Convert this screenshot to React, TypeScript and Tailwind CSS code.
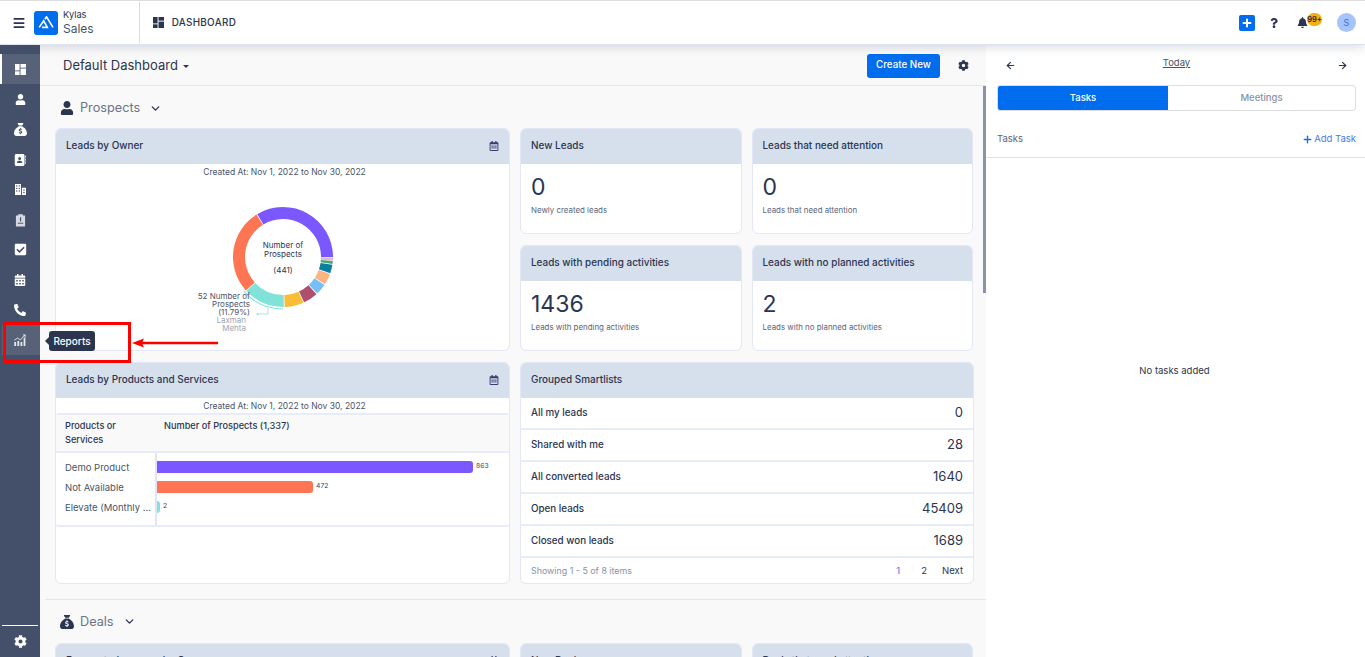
import { ArrowLeft, ArrowRight, ChevronDown, Menu, Plus } from "lucide-react";
import { FaBell, FaCalendarAlt, FaCheckSquare, FaCog, FaPhoneAlt, FaQuestion, FaUser, FaRegCalendarAlt } from "react-icons/fa";
import { FaSackDollar, FaAddressBook } from "react-icons/fa6";

const font = "font-['Inter','Liberation_Sans',sans-serif]";

function DashIcon({ className }: { className?: string }) {
  return (
    <svg viewBox="0 0 12 12" className={className} fill="currentColor">
      <rect x="0" y="0" width="5" height="7" />
      <rect x="0" y="8" width="5" height="4" />
      <rect x="6" y="0" width="6" height="4" />
      <rect x="6" y="5" width="6" height="7" />
    </svg>
  );
}

function BuildingIcon() {
  return (
    <svg viewBox="0 0 12 12" className="h-[11px] w-[11px]" fill="currentColor">
      <path d="M0 0h6.5v12H0zM7.5 4H12v8H7.5z" />
      <g fill="#44506a">
        <rect x="1.2" y="1.5" width="1.3" height="1.3" />
        <rect x="4" y="1.5" width="1.3" height="1.3" />
        <rect x="1.2" y="4.2" width="1.3" height="1.3" />
        <rect x="4" y="4.2" width="1.3" height="1.3" />
        <rect x="1.2" y="7" width="1.3" height="1.3" />
        <rect x="4" y="7" width="1.3" height="1.3" />
        <rect x="9" y="6" width="1.5" height="1.3" />
        <rect x="9" y="8.6" width="1.5" height="1.3" />
      </g>
    </svg>
  );
}

function ClipIcon() {
  return (
    <svg viewBox="0 0 12 14" className="h-[14px] w-[11px] text-[#d5d9e2]" fill="currentColor">
      <path d="M1 2h2.5V.8h5V2H11v12H1z" />
      <rect x="3" y="10" width="6" height="1" fill="#44506a" />
      <rect x="5.4" y="4" width="1.3" height="4.5" fill="#44506a" />
    </svg>
  );
}

function ReportIcon() {
  return (
    <svg viewBox="0 0 12 12" className="h-[12px] w-[12px] text-[#e4e7ee]" fill="currentColor">
      <rect x="0.3" y="8" width="1.8" height="4" />
      <rect x="3.4" y="7" width="1.8" height="5" />
      <rect x="6.5" y="8" width="1.8" height="4" />
      <rect x="9.6" y="3.5" width="1.8" height="8.5" />
      <path d="M0.3 6.2 3.6 4l2.8 2 3.8-4.6" stroke="currentColor" strokeWidth="0.9" fill="none" />
      <path d="M8.6 0.6h3v3z" />
    </svg>
  );
}

function Sidebar() {
  const ic = "h-[11px] w-[11px]";
  const items = [
    <DashIcon className={ic} key="a" />,
    <FaUser className={ic} key="b" />,
    <FaSackDollar className="h-[13px] w-[13px]" key="c" />,
    <FaAddressBook className="h-[12px] w-[12px]" key="d" />,
    <BuildingIcon key="e" />,
    <ClipIcon key="f" />,
    <FaCheckSquare className="h-[13px] w-[13px]" key="g" />,
    <FaCalendarAlt className="h-[12px] w-[12px]" key="h" />,
    <FaPhoneAlt className="h-[12px] w-[12px]" key="i" />,
    <ReportIcon key="j" />,
  ];
  return (
    <aside className="flex w-10 shrink-0 flex-col bg-[#44506a] text-white">
      <div className="flex flex-1 flex-col pt-[9px]">
        {items.map((icon, i) => (
          <div
            key={i}
            className={
              "flex h-[30px] items-center justify-center " +
              (i === 0 ? "border-l-2 border-white bg-[#576279] pr-[1px] mb-[0.6px]" : "") +
              (i === 9 ? "bg-[#576279] ml-[2px] pr-[2px]" : "")
            }
          >
            {icon}
          </div>
        ))}
      </div>
      <div className="mx-[2px] h-[1px] bg-white" />
      <div className="flex h-[31px] items-center justify-center">
        <FaCog className="h-[13px] w-[13px]" />
      </div>
    </aside>
  );
}

function Header() {
  return (
    <header className="relative z-10 flex h-[45px] shrink-0 items-center border-t border-[#dddddd] border-b border-b-[#dfe3f0] bg-white shadow-[0_2px_10px_rgba(60,70,100,0.2)]">
      <Menu className="ml-[12px] h-[14px] w-[14px] text-[#2b3550]" strokeWidth={3} />
      <div className="ml-[8px] flex h-[24px] w-[24px] items-center justify-center rounded-[3px] bg-[#006dee]">
        <svg viewBox="0 0 20 16" className="h-[13px] w-[17px]" fill="none" stroke="white" strokeWidth="2">
          <path d="M1 14 6.5 6 11 14H4.5M8 4l2-3 8 13" />
        </svg>
      </div>
      <div className="ml-[5px] flex flex-col text-[#2b3550]">
        <span className="text-[9.3px] leading-[12px]">Kylas</span>
        <span className="text-[12px] leading-[16px] text-[#4a5468]">Sales</span>
      </div>
      <div className="ml-[45px] h-[41px] w-px bg-[#d9dce3]" />
      <DashIcon className="ml-[13px] h-[11px] w-[11px] text-[#2b3550]" />
      <span className="mb-[1px] ml-[8px] text-[9.9px] font-medium tracking-[0.3px] text-[#2b3550]">DASHBOARD</span>
      <div className="ml-auto flex items-center">
        <div className="flex h-4 w-4 items-center justify-center rounded-[2px] bg-[#006dee]">
          <Plus className="h-3 w-3 text-white" strokeWidth={4} />
        </div>
        <FaQuestion className="ml-[14px] h-[10px] w-[10px] text-[#2b3550]" />
        <div className="relative ml-[18px] mr-[29px] text-[#2b3550]">
          <FaBell className="h-[11px] w-[11px]" />
          <span className="absolute -top-[4px] left-[10px] flex h-[13px] w-[15px] items-center justify-center rounded-full bg-[#f2b111] text-[7.5px] font-semibold text-[#1f2533]">
            99+
          </span>
        </div>
        <div className="mr-[9px] flex h-[19px] w-[19px] items-center justify-center rounded-full bg-[#a5c4fb] text-[9px] text-[#3f6fd0]">
          S
        </div>
      </div>
    </header>
  );
}

function Card({ title, icon, children, className }: { title: string; icon?: boolean; children?: React.ReactNode; className?: string }) {
  return (
    <div className={"overflow-hidden rounded-[6px] border border-[#e3e7f6] bg-white " + (className ?? "")}>
      <div className="flex h-[35px] items-center justify-between bg-[#d6e0ec] pb-[2px] pl-[10px] pr-[10px] text-[9.95px] font-medium text-[#2b3550]">
        <span>{title}</span>
        {icon && <FaRegCalendarAlt className="h-[10px] w-[10px] text-[#3a3a6e]" />}
      </div>
      {children}
    </div>
  );
}

function Stat({ title, value, sub }: { title: string; value: string; sub: string }) {
  return (
    <Card title={title}>
      <div className="px-[10px] pt-[9px] text-[#2b3550]">
        <div className="text-[23px] leading-[28px]">{value}</div>
        <div className="mt-[3px] text-[7.9px] leading-[12px] text-[#5a6478]">{sub}</div>
      </div>
    </Card>
  );
}

function polar(r: number, deg: number) {
  const a = ((deg - 90) * Math.PI) / 180;
  return [50 + r * Math.cos(a), 50 + r * Math.sin(a)];
}

function arc(r1: number, r2: number, s: number, e: number) {
  const [a, b] = polar(r2, s);
  const [c, d] = polar(r2, e);
  const [f, g] = polar(r1, e);
  const [h, i] = polar(r1, s);
  const large = e - s > 180 ? 1 : 0;
  return `M${a} ${b}A${r2} ${r2} 0 ${large} 1 ${c} ${d}L${f} ${g}A${r1} ${r1} 0 ${large} 0 ${h} ${i}Z`;
}

const slices = [
  [-31, 90, "#7a57ff"],
  [90.5, 94, "#dcb8e8"],
  [94.5, 98, "#4aa86f"],
  [99, 109, "#0b7fa0"],
  [110, 123, "#ffb380"],
  [124, 137, "#74bff8"],
  [138, 155, "#ae506c"],
  [156, 178, "#f9bd3a"],
  [179, 227, "#80e2d8"],
  [228, 328, "#ff7452"],
] as [number, number, string][];

function Donut() {
  return (
    <div className="relative h-[185px]">
      <div className="pl-[4px] pt-[2px] text-center text-[8.5px] leading-[12px] text-[#4a5468]">Created At: Nov 1, 2022 to Nov 30, 2022</div>
      <svg viewBox="0 0 100 100" className="absolute left-[177px] top-[43px] h-[100px] w-[100px] overflow-visible">
        {slices.map(([s, e, c]) => (
          <path key={c} d={arc(38, 50, s, e)} fill={c} />
        ))}
        <path d={arc(51.5, 52.5, 180, 229)} fill="#80e2d8" />
        <path d="M25 107h10v-6" stroke="#80e2d8" strokeWidth="0.7" fill="none" />
        <circle cx="24.5" cy="107" r="1" fill="#80e2d8" />
      </svg>
      <div className="absolute left-[197px] top-[77px] w-[60px] text-center text-[8px] leading-[8.5px] text-[#2b3550]">
        Number of
        <br />
        Prospects
        <div className="mt-[8px]">(441)</div>
      </div>
      <div className="absolute left-[130px] top-[128px] w-[64px] text-right text-[8px] leading-[8px] text-[#4a5468]">
        <div>52 Number of</div>
        <div>Prospects</div>
        <div>(11.79%)</div>
        <div className="pr-[4px] text-[#a0a5b0]">Laxman</div>
        <div className="pr-[4px] text-[#a0a5b0]">Mehta</div>
      </div>
    </div>
  );
}

function Bars() {
  const rows = [
    ["Demo Product", 316, "#7a57ff", "863"],
    ["Not Available", 156, "#ff7452", "472"],
    ["Elevate (Monthly ...", 3, "#80e2d8", "2"],
  ] as [string, number, string, string][];
  return (
    <div>
      <div className="pl-[4px] pt-[2px] text-center text-[8.5px] leading-[12px] text-[#4a5468]">Created At: Nov 1, 2022 to Nov 30, 2022</div>
      <div className="mt-[1px] rounded-[3px] border-y-2 border-[#e8ebf9]">
        <div className="flex h-[38px] border-b-2 border-[#e8ebf9] bg-[#f9f9f9] text-[9.2px] font-medium leading-[14px] text-[#2b3550]">
          <div className="w-[108px] pl-[9px] pt-[4px]">
            Products or
            <br />
            Services
          </div>
          <div className="pt-[4px]">Number of Prospects (1,337)</div>
        </div>
        <div className="flex h-[72px]">
          <div className="w-[101px] border-r-2 border-[#e0e4f8] pl-[9px] pt-[5px] text-[9.5px] text-[#4a5468]">
            {rows.map((r) => (
              <div key={r[0]} className="flex h-[20px] items-center whitespace-nowrap">
                {r[0]}
              </div>
            ))}
          </div>
          <div className="flex-1 pt-[8px]">
            {rows.map((r) => (
              <div key={r[0]} className="flex h-[20px] items-start">
                <div className="h-[12px] rounded-r-[3px]" style={{ width: r[1], background: r[2] }} />
                <span className="ml-[3px] text-[6.8px] leading-[10px] text-[#3f4757]">{r[3]}</span>
              </div>
            ))}
          </div>
        </div>
      </div>
    </div>
  );
}

function Smartlists() {
  const rows = [
    ["All my leads", "0"],
    ["Shared with me", "28"],
    ["All converted leads", "1640"],
    ["Open leads", "45409"],
    ["Closed won leads", "1689"],
  ];
  return (
    <Card title="Grouped Smartlists" className="h-[222px] w-[454px]">
      {rows.map((r) => (
        <div key={r[0]} className="flex h-[32px] items-center justify-between border-b-2 border-[#e8ebf9] px-[10px] text-[#2b3550]">
          <span className="text-[9.8px] font-medium">{r[0]}</span>
          <span className="text-[13px]">{r[1]}</span>
        </div>
      ))}
      <div className="flex h-[25px] items-center justify-between px-[10px] pt-[1px] text-[8.9px] text-[#8a92a5]">
        <span>Showing 1 - 5 of 8 items</span>
        <div className="flex text-[9.5px] text-[#2b3550]">
          <span className="text-[#3f6cf0]">1</span>
          <span className="ml-[21px]">2</span>
          <span className="ml-[15px]">Next</span>
        </div>
      </div>
    </Card>
  );
}

function Main() {
  return (
    <main className="relative w-[946px] shrink-0 overflow-hidden bg-[#f9f9f9]">
      <div className="flex h-[41px] items-center border-b border-[#e3e7f4] pl-[23px] pt-[1px]">
        <span className="text-[13px] text-[#2b3550]">Default Dashboard</span>
        <span className="ml-[5px] mt-[2px] h-0 w-0 border-x-[3px] border-t-[3px] border-x-transparent border-t-[#2b3550]" />
        <button className="ml-auto flex h-[24px] w-[73px] items-center justify-center rounded-[3px] bg-[#006dee] text-[9.8px] font-medium text-white">
          Create New
        </button>
        <FaCog className="ml-[18px] mr-[17px] h-[11px] w-[11px] text-[#2b3550]" />
      </div>

      <div className="flex h-[42px] items-center pl-[20px] pt-[2px]">
        <FaUser className="h-[14px] w-[14px] text-[#2b3550]" />
        <span className="ml-[6px] text-[12.7px] text-[#6b7488]">Prospects</span>
        <ChevronDown className="ml-[9px] h-[13px] w-[13px] text-[#2b3550]" strokeWidth={2.5} />
      </div>

      <div className="ml-[15px] grid w-[919px] grid-cols-[455px_221.5px_221.5px] grid-rows-[106px_106px_222px] gap-x-[10px] gap-y-[11px]">
        <Card title="Leads by Owner" icon className="row-span-2">
          <Donut />
        </Card>
        <Stat title="New Leads" value="0" sub="Newly created leads" />
        <Stat title="Leads that need attention" value="0" sub="Leads that need attention" />
        <Stat title="Leads with pending activities" value="1436" sub="Leads with pending activities" />
        <Stat title="Leads with no planned activities" value="2" sub="Leads with no planned activities" />
        <Card title="Leads by Products and Services" icon>
          <Bars />
        </Card>
        <div className="col-span-2">
          <Smartlists />
        </div>
      </div>

      <div className="ml-[5px] mt-[15px] h-px w-[941px] bg-[#e3e7f4]" />

      <div className="flex h-[43px] items-center pl-[20px]">
        <FaSackDollar className="h-[14px] w-[14px] text-[#2b3550]" />
        <span className="ml-[6px] text-[12.7px] text-[#6b7488]">Deals</span>
        <ChevronDown className="ml-[9px] h-[13px] w-[13px] text-[#2b3550]" strokeWidth={2.5} />
      </div>

      <div className="ml-[15px] grid w-[919px] grid-cols-[455px_221.5px_221.5px] gap-x-[10px]">
        <Card title="Forecasted revenue by Owner" icon className="h-[100px]" />
        <Card title="New Deals" className="h-[100px]" />
        <Card title="Deals that need attention" className="h-[100px]" />
      </div>

      <div className="absolute right-0 top-[41px] h-[207px] w-[3px] bg-[#8a92a5]" />
    </main>
  );
}

function RightPanel() {
  return (
    <section className="flex-1 bg-white text-[#2b3550]">
      <div className="flex h-[40px] items-start justify-between pl-[19px] pr-[17px] pt-[15px]">
        <ArrowLeft className="h-[11px] w-[11px]" strokeWidth={2.5} />
        <span className="-mt-[4px] text-[9.5px] text-[#4a5468] underline">Today</span>
        <ArrowRight className="h-[11px] w-[11px]" strokeWidth={2.5} />
      </div>
      <div className="ml-[11px] flex h-[26px] w-[359px] overflow-hidden rounded-[3px] border border-[#dedede] text-[9.5px] font-medium">
        <div className="flex w-[170px] items-center justify-center bg-[#006dee] text-white">Tasks</div>
        <div className="flex flex-1 items-center justify-center text-[#8a92a5]">Meetings</div>
      </div>
      <div className="flex h-[47px] items-center justify-between border-b border-[#e0e0e0] pl-[11px] pr-[9px] pt-[11px]">
        <span className="text-[9.5px] text-[#5a6478]">Tasks</span>
        <span className="flex items-center text-[9.5px] text-[#3f7cf0]">
          <Plus className="mr-[1px] h-[11px] w-[11px] text-[#1f6be0]" strokeWidth={3} />
          Add Task
        </span>
      </div>
      <div className="pt-[206px] pr-[2px] text-center text-[9.5px] text-[#2b3550]">No tasks added</div>
    </section>
  );
}

function Annotation() {
  return (
    <>
      <div className="absolute left-[49px] top-[331px] flex h-5 w-[46px] items-center justify-center rounded-[3px] bg-[#2b3550] text-[10px] font-medium text-white">
        <span className="absolute -left-[4px] top-[6px] h-0 w-0 border-y-[4px] border-r-[4px] border-y-transparent border-r-[#2b3550]" />
        Reports
      </div>
      <div className="absolute left-[3px] top-[322px] h-[41px] w-[128px] border-[3px] border-[#ff0000]" />
      <svg viewBox="0 0 88 12" className="absolute left-[131px] top-[337px] h-3 w-[88px]">
        <path d="M1 6 13 1.5 11.5 4.8H87v2.4H11.5L13 10.5z" fill="#ff0000" />
      </svg>
    </>
  );
}

export default function App() {
  return (
    <div className={"relative flex h-[657px] w-[1365px] flex-col overflow-hidden " + font}>
      <Header />
      <div className="flex min-h-0 flex-1">
        <Sidebar />
        <Main />
        <RightPanel />
      </div>
      <Annotation />
    </div>
  );
}
